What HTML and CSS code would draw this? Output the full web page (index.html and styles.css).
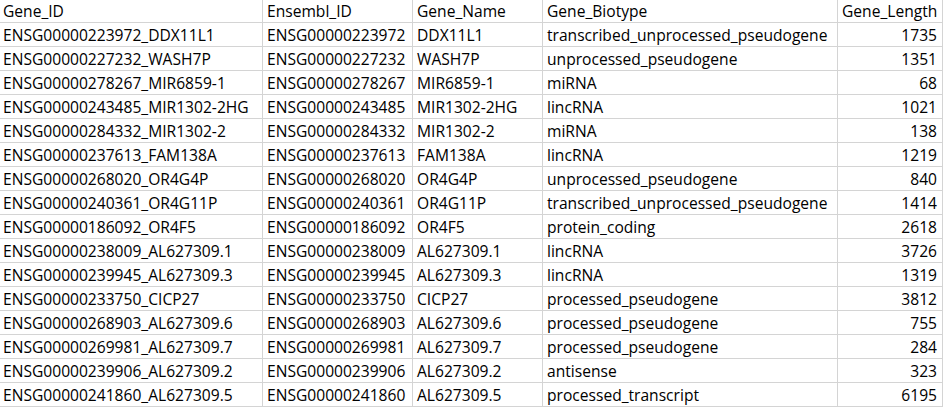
FILE: index.html
```html
<!DOCTYPE html>
<html>
<head>
<meta charset="utf-8">
<link rel="stylesheet" href="styles.css">
</head>
<body>
<div class="sheet">
  <div class="row head">
    <div class="c c1">Gene_ID</div><div class="c c2">Ensembl_ID</div><div class="c c3">Gene_Name</div><div class="c c4">Gene_Biotype</div><div class="c c5 hl">Gene_Length</div>
  </div>
  <div class="row"><div class="c c1">ENSG00000223972_DDX11L1</div><div class="c c2">ENSG00000223972</div><div class="c c3">DDX11L1</div><div class="c c4">transcribed_unprocessed_pseudogene</div><div class="c c5 num">1735</div></div>
  <div class="row"><div class="c c1">ENSG00000227232_WASH7P</div><div class="c c2">ENSG00000227232</div><div class="c c3">WASH7P</div><div class="c c4">unprocessed_pseudogene</div><div class="c c5 num">1351</div></div>
  <div class="row"><div class="c c1">ENSG00000278267_MIR6859-1</div><div class="c c2">ENSG00000278267</div><div class="c c3">MIR6859-1</div><div class="c c4">miRNA</div><div class="c c5 num">68</div></div>
  <div class="row"><div class="c c1">ENSG00000243485_MIR1302-2HG</div><div class="c c2">ENSG00000243485</div><div class="c c3">MIR1302-2HG</div><div class="c c4">lincRNA</div><div class="c c5 num">1021</div></div>
  <div class="row"><div class="c c1">ENSG00000284332_MIR1302-2</div><div class="c c2">ENSG00000284332</div><div class="c c3">MIR1302-2</div><div class="c c4">miRNA</div><div class="c c5 num">138</div></div>
  <div class="row"><div class="c c1">ENSG00000237613_FAM138A</div><div class="c c2">ENSG00000237613</div><div class="c c3">FAM138A</div><div class="c c4">lincRNA</div><div class="c c5 num">1219</div></div>
  <div class="row"><div class="c c1">ENSG00000268020_OR4G4P</div><div class="c c2">ENSG00000268020</div><div class="c c3">OR4G4P</div><div class="c c4">unprocessed_pseudogene</div><div class="c c5 num">840</div></div>
  <div class="row"><div class="c c1">ENSG00000240361_OR4G11P</div><div class="c c2">ENSG00000240361</div><div class="c c3">OR4G11P</div><div class="c c4">transcribed_unprocessed_pseudogene</div><div class="c c5 num">1414</div></div>
  <div class="row"><div class="c c1">ENSG00000186092_OR4F5</div><div class="c c2">ENSG00000186092</div><div class="c c3">OR4F5</div><div class="c c4">protein_coding</div><div class="c c5 num">2618</div></div>
  <div class="row"><div class="c c1">ENSG00000238009_AL627309.1</div><div class="c c2">ENSG00000238009</div><div class="c c3">AL627309.1</div><div class="c c4">lincRNA</div><div class="c c5 num">3726</div></div>
  <div class="row"><div class="c c1">ENSG00000239945_AL627309.3</div><div class="c c2">ENSG00000239945</div><div class="c c3">AL627309.3</div><div class="c c4">lincRNA</div><div class="c c5 num">1319</div></div>
  <div class="row"><div class="c c1">ENSG00000233750_CICP27</div><div class="c c2">ENSG00000233750</div><div class="c c3">CICP27</div><div class="c c4">processed_pseudogene</div><div class="c c5 num">3812</div></div>
  <div class="row"><div class="c c1">ENSG00000268903_AL627309.6</div><div class="c c2">ENSG00000268903</div><div class="c c3">AL627309.6</div><div class="c c4">processed_pseudogene</div><div class="c c5 num">755</div></div>
  <div class="row"><div class="c c1">ENSG00000269981_AL627309.7</div><div class="c c2">ENSG00000269981</div><div class="c c3">AL627309.7</div><div class="c c4">processed_pseudogene</div><div class="c c5 num">284</div></div>
  <div class="row"><div class="c c1">ENSG00000239906_AL627309.2</div><div class="c c2">ENSG00000239906</div><div class="c c3">AL627309.2</div><div class="c c4">antisense</div><div class="c c5 num">323</div></div>
  <div class="row"><div class="c c1">ENSG00000241860_AL627309.5</div><div class="c c2">ENSG00000241860</div><div class="c c3">AL627309.5</div><div class="c c4">processed_transcript</div><div class="c c5 num">6195</div></div>
</div>
</body>
</html>
```
FILE: styles.css
```css
html, body {
  margin: 0;
  padding: 0;
  background: #ffffff;
}
.sheet {
  display: flex;
  flex-direction: column;
  width: 943px;
  font-family: "Open Sans", Lato, sans-serif;
  font-size: 15.6px;
  color: #000000;
}
.row {
  display: grid;
  grid-template-columns: 263px 150px 130px 295px 105px;
  height: 24px;
}
.row.head {
  height: 23px;
}
.c {
  box-sizing: border-box;
  border-right: 1px solid #d4d4d4;
  border-bottom: 1px solid #d4d4d4;
  display: flex;
  align-items: flex-end;
  padding: 0 4px 2px 4px;
  line-height: 18px;
  white-space: nowrap;
  overflow: hidden;
}
.c1 {
  padding-left: 3px;
}
.num {
  justify-content: flex-end;
  padding-right: 5px;
}
```
